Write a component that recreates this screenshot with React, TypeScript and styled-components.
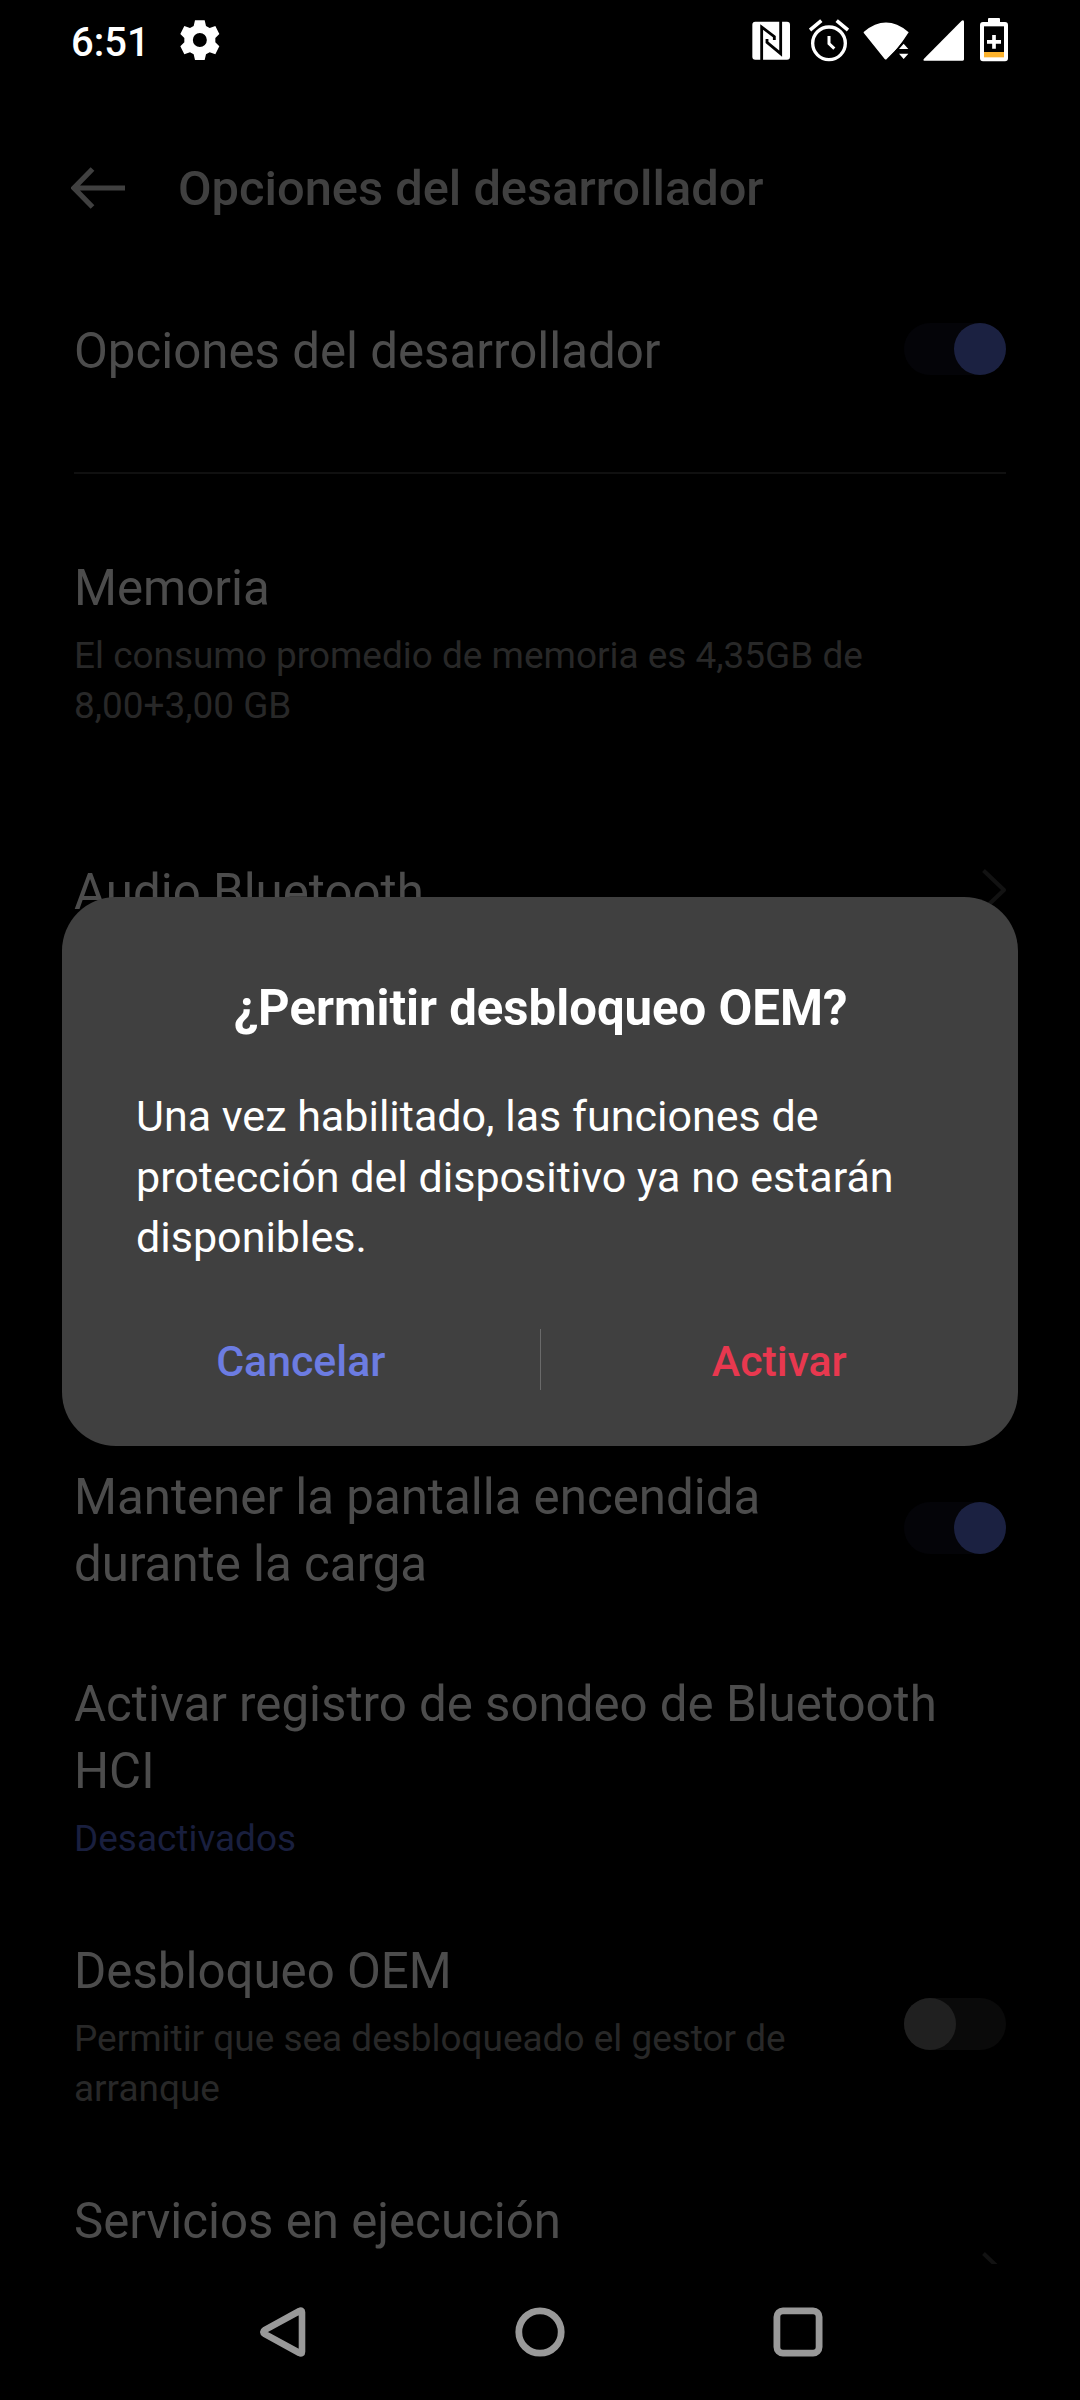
import React from "react";
import styled, { createGlobalStyle } from "styled-components";

const GlobalStyle = createGlobalStyle`
  * { box-sizing: border-box; }
  html, body { margin: 0; padding: 0; background: #000; }
  body { width: 1080px; height: 2400px; overflow: hidden; }
`;

const Screen = styled.div`
  position: relative;
  display: flex;
  flex-direction: column;
  width: 1080px;
  height: 2400px;
  overflow: hidden;
  background: #000;
  font-family: Roboto, "Noto Sans", sans-serif;
`;

const StatusBar = styled.header`
  flex: none;
  display: flex;
  align-items: center;
  height: 82px;
  padding: 0 72px 0 71px;
  color: #fff;
`;

const Clock = styled.span`
  width: 109px;
  padding-top: 3px;
  font-size: 40px;
  font-weight: 500;
  line-height: 48px;
`;

const StatusIcons = styled.div`
  display: flex;
  align-items: center;
  margin-left: auto;
`;

const StatusGlyph = styled.svg<{ $gap: number }>`
  display: block;
  margin-left: ${(p) => p.$gap}px;
`;

const AppBar = styled.div`
  flex: none;
  display: flex;
  align-items: center;
  height: 213px;
  padding: 0 71px;
`;

const BackArrow = styled.svg`
  display: block;
  margin: 0 52px 1px 0;
`;

const ScreenTitle = styled.h1`
  margin: 0;
  color: #404040;
  font-size: 48.8px;
  font-weight: 500;
  line-height: 68px;
`;

const List = styled.main`
  flex: none;
  display: flex;
  flex-direction: column;
  height: 1969px;
  padding: 23px 74px 0;
  overflow: hidden;
`;

const Row = styled.section<{ $height: number; $after: number }>`
  flex: none;
  display: flex;
  align-items: center;
  justify-content: space-between;
  height: ${(p) => p.$height}px;
  margin-bottom: ${(p) => p.$after}px;
`;

const Texts = styled.div`
  align-self: flex-start;
  white-space: nowrap;
`;

const Title = styled.div`
  color: #4c4c4c;
  font-size: 49.22px;
  line-height: 67px;
`;

const Summary = styled.div<{ $accent?: boolean }>`
  margin-top: 8.5px;
  color: ${(p) => (p.$accent ? "#191f3e" : "#282828")};
  font-size: 36.95px;
  line-height: 50px;
`;

const Divider = styled.hr`
  flex: none;
  width: 100%;
  height: 2px;
  margin: 0 0 81px;
  border: 0;
  background: #101010;
`;

const Track = styled.div<{ $on: boolean }>`
  display: flex;
  justify-content: ${(p) => (p.$on ? "flex-end" : "flex-start")};
  width: 102px;
  height: 52px;
  margin-bottom: ${(p) => (p.$on ? 6 : 3)}px;
  border-radius: 26px;
  background: ${(p) => (p.$on ? "#040408" : "#0a0a0a")};
`;

const Knob = styled.div<{ $on: boolean }>`
  width: 52px;
  height: 52px;
  border-radius: 50%;
  background: ${(p) => (p.$on ? "#1b2141" : "#202020")};
`;

const ChevronSvg = styled.svg`
  display: block;
  margin-bottom: 6px;
`;

const NavBar = styled.nav`
  flex: none;
  display: grid;
  grid-template-columns: repeat(3, 258px);
  justify-content: center;
  align-items: center;
  justify-items: center;
  height: 136px;
`;

const Dialog = styled.div`
  position: absolute;
  left: 62px;
  top: 897px;
  display: flex;
  flex-direction: column;
  width: 956px;
  height: 549px;
  padding-top: 77px;
  border-radius: 54px;
  background: #404040;
`;

const DialogTitle = styled.h2`
  margin: 0;
  padding-left: 1px;
  color: #fff;
  font-size: 49.1px;
  font-weight: 700;
  line-height: 68px;
  text-align: center;
`;

const DialogBody = styled.p`
  margin: 45px 0 0;
  padding: 0 74px;
  color: #fff;
  font-size: 43.04px;
  line-height: 60.5px;
  white-space: nowrap;
`;

const Actions = styled.div`
  display: grid;
  grid-template-columns: 1fr 1px 1fr;
  align-items: center;
  margin-top: 60px;
  height: 62px;
`;

const ActionButton = styled.button<{ $color: string }>`
  height: 62px;
  padding: 3px 0 0;
  border: 0;
  background: transparent;
  color: ${(p) => p.$color};
  font-family: inherit;
  font-size: 42.8px;
  font-weight: 500;
  line-height: 58px;
`;

const ActionDivider = styled.span`
  height: 61px;
  background: #6a6a6a;
`;

const Switch = ({ on }: { on: boolean }) => (
  <Track $on={on} role="switch" aria-checked={on}>
    <Knob $on={on} />
  </Track>
);

const Chevron = () => (
  <ChevronSvg width="25" height="42" viewBox="0 0 25 42" fill="none" stroke="#121212" strokeWidth="4" strokeLinejoin="round">
    <path d="M2.5 1.5 23 21 2.5 40.5" />
  </ChevronSvg>
);

export default function App() {
  return (
    <>
      <GlobalStyle />
      <Screen>
        <StatusBar>
          <Clock>6:51</Clock>
          <svg width="40" height="42" viewBox="0 1 120 126" fill="#fff">
            <path
              fillRule="evenodd"
              d="M45 2h29l4 17 11 6 17-6 12 24-12 12v13l12 12-12 24-17-6-11 6-4 17H45l-4-17-11-6-17 6L1 80l12-12V55L1 43l12-24 17 6 11-6ZM59.500 40a21 21 0 1 0 0 42 21 21 0 0 0 0-42Z"
            />
          </svg>
          <StatusIcons>
            <StatusGlyph $gap={0} width="39" height="40" viewBox="0 0 117 120">
              <rect x="1" y="2" width="113" height="114" rx="9" fill="#fff" />
              <path d="M29 118V18L67 47V57M86 0V98L45 64V54" fill="none" stroke="#000" strokeWidth="8.5" />
            </StatusGlyph>
            <StatusGlyph $gap={18} width="40" height="44" viewBox="0 0 120 132" fill="none" stroke="#fff">
              <circle cx="60" cy="73" r="49" strokeWidth="10" />
              <path d="M60 51V74L76 89" strokeWidth="9" />
              <path d="M3 33 37 5M117 33 83 5" strokeWidth="11" />
            </StatusGlyph>
            <StatusGlyph $gap={14} width="47" height="40" viewBox="0 0 141 120" fill="#fff">
              <path d="M3 32Q69-23 135 32Q138 34 135 37L118 62 104 80 71 114Q69 117 65 114L3 37Q1 34 3 32Z" />
              <path d="M124 56 98 88V120H141V56Z" fill="#000" />
              <path d="M70 114 137 34 118 56 96 88Z" />
              <path d="M108 84 122 68 136 84ZM108 98H136L122 114Z" />
            </StatusGlyph>
            <StatusGlyph $gap={13} width="42" height="42" viewBox="0 0 126 126" fill="#fff">
              <path d="M116 2Q123-2 123 6V118Q123 122 119 122H4Q-1 122 3 116Z" />
            </StatusGlyph>
            <StatusGlyph $gap={15} width="28" height="46" viewBox="0 0 84 138">
              <path
                fill="#fff"
                d="M27 0H57Q60 0 60 3V12H75Q84 12 84 21V121Q84 130 75 130H9Q0 130 0 121V21Q0 12 9 12H24V3Q24 0 27 0Z"
              />
              <path d="M12 25H72V102H12Z" fill="#000" />
              <path d="M12 102H72V118H12Z" fill="#fcb22c" />
              <path d="M42 51V92M21 71.5H63" stroke="#fff" strokeWidth="11" />
            </StatusGlyph>
          </StatusIcons>
        </StatusBar>

        <AppBar>
          <BackArrow width="55" height="42" viewBox="0 0 55 42" fill="none" stroke="#404040" strokeWidth="5.2">
            <path d="M54 21H4M21.5 2 3 21 21.5 40" />
          </BackArrow>
          <ScreenTitle>Opciones del desarrollador</ScreenTitle>
        </AppBar>

        <List>
          <Row $height={67} $after={87}>
            <Texts>
              <Title>Opciones del desarrollador</Title>
            </Texts>
            <Switch on />
          </Row>
          <Divider />
          <Row $height={175} $after={129}>
            <Texts>
              <Title>Memoria</Title>
              <Summary>
                El consumo promedio de memoria es 4,35GB de
                <br />
                8,00+3,00 GB
              </Summary>
            </Texts>
          </Row>
          <Row $height={67} $after={538}>
            <Texts>
              <Title>Audio Bluetooth</Title>
            </Texts>
            <Chevron />
          </Row>
          <Row $height={134} $after={73}>
            <Texts>
              <Title>
                Mantener la pantalla encendida
                <br />
                durante la carga
              </Title>
            </Texts>
            <Switch on />
          </Row>
          <Row $height={192} $after={75}>
            <Texts>
              <Title>
                Activar registro de sondeo de Bluetooth
                <br />
                HCI
              </Title>
              <Summary $accent>Desactivados</Summary>
            </Texts>
          </Row>
          <Row $height={175} $after={75}>
            <Texts>
              <Title>Desbloqueo OEM</Title>
              <Summary>
                Permitir que sea desbloqueado el gestor de
                <br />
                arranque
              </Summary>
            </Texts>
            <Switch on={false} />
          </Row>
          <Row $height={175} $after={0}>
            <Texts>
              <Title>Servicios en ejecución</Title>
            </Texts>
            <Chevron />
          </Row>
        </List>

        <NavBar>
          <svg width="50" height="52" viewBox="-1 0 50 52" fill="none" stroke="#999" strokeWidth="6.6" strokeLinejoin="round">
            <path d="M44 6.3V45.7Q44 48.5 41.5 47L7 28.2Q3.5 26 7 23.8L41.5 5Q44 3.5 44 6.3Z" />
          </svg>
          <svg width="52" height="52" viewBox="0 0 52 52" fill="none" stroke="#999" strokeWidth="6.8">
            <circle cx="26" cy="26" r="21.2" />
          </svg>
          <svg width="52" height="52" viewBox="0 0 52 52" fill="none" stroke="#999" strokeWidth="6.8">
            <rect x="4.9" y="4.9" width="42.2" height="42.2" rx="6" />
          </svg>
        </NavBar>

        <Dialog role="dialog" aria-modal="true">
          <DialogTitle>¿Permitir desbloqueo OEM?</DialogTitle>
          <DialogBody>
            Una vez habilitado, las funciones de
            <br />
            protección del dispositivo ya no estarán
            <br />
            disponibles.
          </DialogBody>
          <Actions>
            <ActionButton $color="#6c7ce2">Cancelar</ActionButton>
            <ActionDivider />
            <ActionButton $color="#e8384f">Activar</ActionButton>
          </Actions>
        </Dialog>
      </Screen>
    </>
  );
}
